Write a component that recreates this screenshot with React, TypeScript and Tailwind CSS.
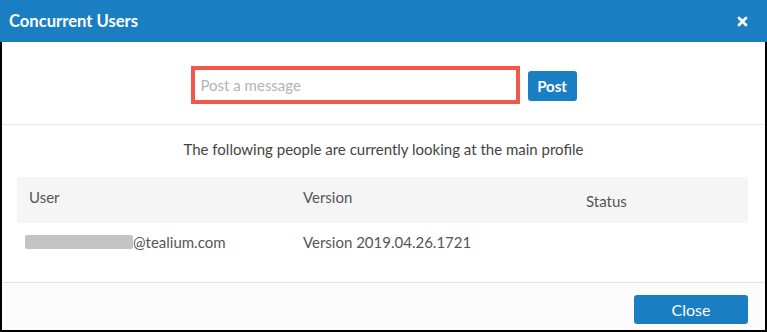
import React from "react";

const BLUE = "bg-[#1a7ec2]";

function CloseIcon() {
  return (
    <svg width="11" height="11" viewBox="0 0 11 11" aria-hidden="true">
      <path
        d="M2 2 L9 9 M9 2 L2 9"
        stroke="#ffffff"
        strokeWidth="2.8"
        strokeLinecap="round"
      />
    </svg>
  );
}

const USERS = [{ domain: "@tealium.com", version: "Version 2019.04.26.1721", status: "" }];

export default function App() {
  return (
    <div
      className="flex h-[332px] w-[767px] flex-col bg-white text-[#444]"
      style={{ fontFamily: "Lato, 'Open Sans', Arial, sans-serif" }}
    >
      <div className={`flex h-[42px] shrink-0 items-center justify-between pl-[9px] pr-[19px] ${BLUE}`}>
        <h2 className="text-[16.6px] font-bold text-white">Concurrent Users</h2>
        <button aria-label="Close" className="flex items-center">
          <CloseIcon />
        </button>
      </div>

      <div className="flex flex-1 flex-col border-x-2 border-b-2 border-black">
        <div className="flex h-[83px] shrink-0 items-center justify-center gap-2 border-b border-[#e6e6e6] pt-[3px]">
          <input
            placeholder="Post a message"
            className="h-[38px] w-[329px] border-4 border-[#f2584a] px-[6px] text-[15px] text-[#444] outline-none placeholder:text-[#b3b3b3]"
          />
          <button className={`mt-[3px] h-[30px] w-[49px] rounded-[3px] text-[15px] font-bold text-white ${BLUE}`}>
            Post
          </button>
        </div>

        <p className="mt-[14px] text-center text-[15px] leading-[20px] text-[#444]">
          The following people are currently looking at the main profile
        </p>

        <div className="ml-[15px] mr-[17px] mt-[18px] text-[15px] text-[#555]">
          <div className="grid h-[46px] grid-cols-[274px_283px_1fr] bg-[#f5f5f5]">
            <div className="pl-[12px] pt-[9px]">User</div>
            <div className="pl-[12px] pt-[9px]">Version</div>
            <div className="pl-[12px] pt-[13px]">Status</div>
          </div>
          {USERS.map((u) => (
            <div key={u.domain} className="grid h-[38px] grid-cols-[274px_283px_1fr] items-center">
              <div className="flex items-center pl-[8px]">
                <span className="inline-block h-[14px] w-[108px] rounded-[2px] bg-[#c4c4c4]" />
                <span>{u.domain}</span>
              </div>
              <div className="pl-[12px]">{u.version}</div>
              <div className="pl-[12px]">{u.status}</div>
            </div>
          ))}
        </div>

        <div className="mt-auto flex h-[48px] items-start justify-end border-t border-[#e0e0e0] bg-[#fcfcfc] pr-[17px] pt-[12px]">
          <button className={`h-[29px] w-[114px] rounded-[3px] text-[16px] text-white ${BLUE}`}>
            Close
          </button>
        </div>
      </div>
    </div>
  );
}
